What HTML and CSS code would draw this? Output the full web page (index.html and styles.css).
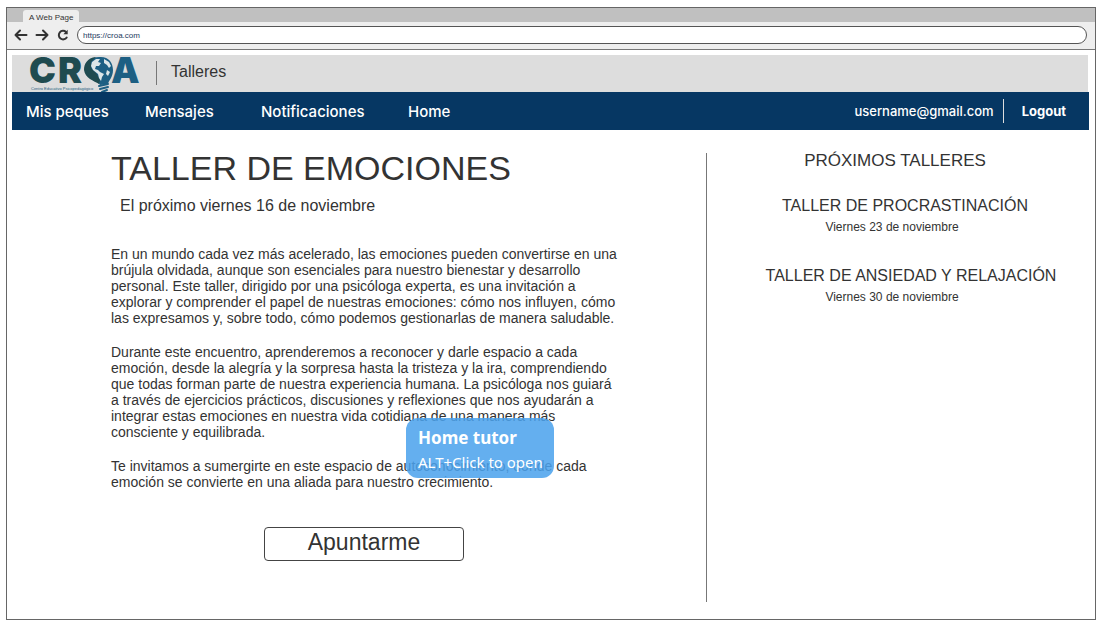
FILE: index.html
```html
<!DOCTYPE html>
<html lang="es">
<head>
<meta charset="utf-8">
<meta name="viewport" content="width=device-width, initial-scale=1">
<title>Talleres - CROA</title>
<link rel="stylesheet" href="styles.css">
</head>
<body>
<div class="browser">
  <div class="tabs"><span class="tab">A Web Page</span></div>
  <div class="toolbar">
    <button class="tool" aria-label="Atrás"><svg width="14" height="12" viewBox="0 0 14 12"><path d="M6 1.5 1.5 6 6 10.500M1.500 6H12.500"/></svg></button>
    <button class="tool" aria-label="Adelante"><svg width="14" height="12" viewBox="0 0 14 12"><path d="M8 1.500 12.500 6 8 10.500M12.500 6H1.500"/></svg></button>
    <button class="tool" aria-label="Recargar"><svg width="14" height="12" viewBox="0 0 14 12"><path d="M10.700 8.500A4.300 4.300 0 1 1 10 2.900"/><path class="solid" d="M11.700.8V5.200H7.400Z"/></svg></button>
    <input class="address" type="text" value="https://croa.com" aria-label="Dirección">
  </div>
  <div class="page">
    <header class="brand">
      <svg class="logo" width="112" height="38" viewBox="0 0 112 38" role="img" aria-label="CROA Centro Educativo Psicopedagógico">
        <text class="logo-dark" x="-1" y="28">C</text>
        <text class="logo-dark" x="28" y="28">R</text>
        <text class="logo-blue" x="81" y="28">A</text>
        <text class="logo-sub" x="1" y="35">Centro Educativo Psicopedagógico</text>
        <path fill="#1d5f83" d="M69 2C78 1 83 7 83 15 83 22 79 25 78 29L70 30C69 26 55 25 55 14 55 7 61 2 69 2Z"/>
        <path fill="#1f4b50" d="M66 2C57 3 54 9 54 15 55 23 64 26 69 29L70 25 66 18 61 13 61 7Z"/>
        <path fill="#dce6e8" d="M62 7 66 4 70 4 68 7 71 8 69 11 66 11 65 14 68 15 70 17 74 19 72 22 71 26 69 23 68 19 63 15 61 11ZM74 4 79 7 81 11 79 13 77 10 74 8ZM77 15 80 17 78 21 76 19Z"/>
        <path fill="none" stroke="#1d5f83" stroke-width="2" stroke-linecap="round" d="M69 31 78 29M70 34 78 32M72 37 77 35"/>
      </svg>
      <span class="brand-line"></span>
      <span class="section">Talleres</span>
    </header>
    <nav class="nav">
      <a class="peques" href="#">Mis peques</a>
      <a class="mensajes" href="#">Mensajes</a>
      <a class="notificaciones" href="#">Notificaciones</a>
      <a href="#">Home</a>
      <div class="account">
        <span class="user">username@gmail.com</span>
        <a class="logout" href="#">Logout</a>
      </div>
    </nav>
    <main class="main">
      <article class="workshop">
        <h1>TALLER DE EMOCIONES</h1>
        <p class="date">El próximo viernes 16 de noviembre</p>
        <div class="copy">
          <p>En un mundo cada vez más acelerado, las emociones pueden convertirse en una<br>brújula olvidada, aunque son esenciales para nuestro bienestar y desarrollo<br>personal. Este taller, dirigido por una psicóloga experta, es una invitación a<br>explorar y comprender el papel de nuestras emociones: cómo nos influyen, cómo<br>las expresamos y, sobre todo, cómo podemos gestionarlas de manera saludable.</p>
          <p>Durante este encuentro, aprenderemos a reconocer y darle espacio a cada<br>emoción, desde la alegría y la sorpresa hasta la tristeza y la ira, comprendiendo<br>que todas forman parte de nuestra experiencia humana. La psicóloga nos guiará<br>a través de ejercicios prácticos, discusiones y reflexiones que nos ayudarán a<br>integrar estas emociones en nuestra vida cotidiana de una manera más<br>consciente y equilibrada.</p>
          <p>Te invitamos a sumergirte en este espacio de autoconocimiento, donde cada<br>emoción se convierte en una aliada para nuestro crecimiento.</p>
          <div class="tooltip" role="tooltip"><strong>Home tutor</strong><span>ALT+Click to open</span></div>
        </div>
        <button class="signup">Apuntarme</button>
      </article>
      <aside class="upcoming">
        <h2>PRÓXIMOS TALLERES</h2>
        <section>
          <h3>TALLER DE PROCRASTINACIÓN</h3>
          <p>Viernes 23 de noviembre</p>
        </section>
        <section>
          <h3 class="wide">TALLER DE ANSIEDAD Y RELAJACIÓN</h3>
          <p>Viernes 30 de noviembre</p>
        </section>
      </aside>
    </main>
  </div>
</div>
</body>
</html>
```
FILE: styles.css
```css
* { box-sizing: border-box; }
body {
  margin: 0;
  padding: 7px 5px 7px 6px;
  min-height: 100vh;
  display: flex;
  background: #fff;
  color: #333;
  font-family: "Liberation Sans", Arial, sans-serif;
}
h1, h2, h3, p { margin: 0; font-weight: 400; }
a { color: inherit; text-decoration: none; }
.browser { flex: 1; display: flex; flex-direction: column; border: 1px solid #666; }
.tabs { height: 14px; padding-left: 16px; background: #c0c0c0; display: flex; align-items: flex-end; }
.tab { height: 12px; padding: 0 6px; border-radius: 3px 3px 0 0; background: #eee; font-size: 8px; line-height: 16px; }
.toolbar {
  height: 28px;
  padding: 0 8px 1px 7px;
  display: flex;
  align-items: center;
  gap: 7px;
  background: #eee;
  border-bottom: 1px solid #777;
}
.tool { width: 14px; height: 14px; padding: 0; border: 0; background: none; display: flex; align-items: center; }
.tool svg { fill: none; stroke: #333; stroke-width: 2; stroke-linecap: round; stroke-linejoin: round; }
.tool .solid { fill: #333; stroke: none; }
.address {
  flex: 1;
  height: 18px;
  padding: 0 5px;
  border: 1px solid #555;
  border-radius: 9px;
  background: #fff;
  color: #1c3a5e;
  font: 8px "Liberation Sans", Arial, sans-serif;
}
.page { flex: 1; display: flex; flex-direction: column; padding: 5px 6px 17px 5px; }
.brand { height: 37px; margin-right: 1px; padding-left: 18px; display: flex; align-items: center; background: #ddd; }
.logo { overflow: visible; }
.logo text { font-family: Inter, sans-serif; font-weight: 900; font-size: 36px; }
.logo .logo-dark { fill: #1f4b50; }
.logo .logo-blue { fill: #1d5f83; }
.logo .logo-sub { font-family: "Liberation Sans", Arial, sans-serif; font-size: 4px; font-weight: 400; fill: #1d5f83; }
.brand-line { width: 1px; height: 24px; margin: 0 14px 2px; background: #777; }
.section { font-size: 16px; padding-bottom: 4px; }
.nav {
  height: 38px;
  padding: 0 23px 0 14px;
  display: flex;
  align-items: center;
  background: #063763;
  color: #fff;
  font-family: Inter, sans-serif;
  font-size: 15px;
  font-weight: 500;
}
.peques { width: 119px; }
.mensajes { width: 116px; }
.notificaciones { width: 147px; }
.account { margin-left: auto; display: flex; align-items: center; font-size: 13px; }
.user { padding-right: 9px; line-height: 24px; border-right: 1px solid #ddd; }
.logout { padding-left: 18px; font-weight: 700; }
.main { flex: 1; display: flex; padding-top: 23px; }
.workshop { width: 694px; padding-left: 99px; display: flex; flex-direction: column; align-items: flex-start; }
h1 { font-size: 34px; line-height: 30px; }
.date { padding: 13px 0 0 9px; font-size: 16px; line-height: 20px; }
.copy { position: relative; padding-top: 30px; display: flex; flex-direction: column; gap: 18px; font-size: 14px; line-height: 16px; white-space: nowrap; }
.tooltip {
  position: absolute;
  left: 295px;
  top: 202px;
  height: 60px;
  padding: 8px 11px 8px 12px;
  display: flex;
  flex-direction: column;
  border-radius: 12px;
  background: rgba(75, 162, 236, 0.86);
  color: #fff;
  font: 15px/24px "Noto Sans", sans-serif;
}
.tooltip strong { font-size: 17px; }
.signup {
  width: 200px;
  height: 34px;
  margin: 37px 0 0 153px;
  padding: 0 0 4px;
  border: 1px solid #444;
  border-radius: 4px;
  background: #fff;
  color: #333;
  font: 23px "Liberation Sans", Arial, sans-serif;
}
.upcoming { flex: 1; padding-right: 6px; border-left: 1px solid #777; text-align: center; }
h2 { font-size: 17px; line-height: 16px; margin-bottom: 27px; }
h3 { padding-left: 20px; font-size: 16px; line-height: 20px; }
h3.wide { padding-left: 32px; }
.upcoming section { padding-bottom: 29px; }
.upcoming section p { padding: 1px 6px 0 0; font-size: 12px; line-height: 20px; }
```
